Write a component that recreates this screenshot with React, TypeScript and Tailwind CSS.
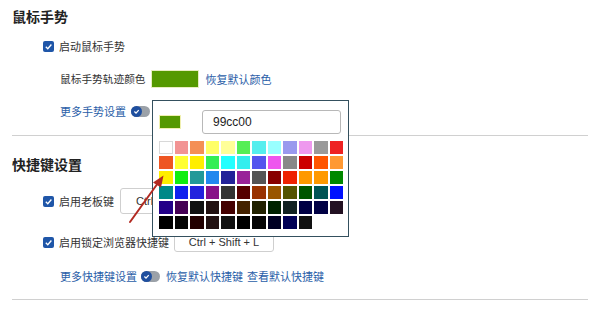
import React from "react";

const rows: string[][] = [
  ["#ffffff", "#f29494", "#f48f55", "#ffff66", "#ffff99", "#55ee55", "#55eeee", "#99ffff", "#9999ee", "#ee99ee", "#9a9a9a", "#ee2222"],
  ["#ee5522", "#ffff33", "#ffee00", "#33ee55", "#22ffff", "#33eeee", "#5555ee", "#ee55ee", "#888888", "#cc0000", "#ff5500", "#ff9933"],
  ["#ffee00", "#11ee11", "#229999", "#2288ee", "#222299", "#992299", "#555555", "#880000", "#ee2200", "#ff9900", "#ff9900", "#008800"],
  ["#008888", "#1122ee", "#2222dd", "#881188", "#333333", "#550000", "#993300", "#995500", "#555500", "#005500", "#005555", "#0011ff"],
  ["#220088", "#440055", "#111111", "#221111", "#440000", "#442200", "#222200", "#002200", "#112222", "#000044", "#000044", "#221122"],
  ["#000000", "#050505", "#220000", "#221111", "#111111", "#000000", "#050505", "#000022", "#000055", "#111111"],
];

function Check() {
  return (
    <span className="w-[11px] h-[11px] bg-[#1f56a8] rounded-[2px] flex items-center justify-center shrink-0">
      <svg width="9" height="9" viewBox="0 0 10 10">
        <path d="M2 5.2 L4.2 7.4 L8.2 2.8" stroke="#fff" strokeWidth="1.5" fill="none" />
      </svg>
    </span>
  );
}

function Toggle() {
  return (
    <span className="relative w-[19px] h-[11px] rounded-full bg-[#9ba1a8] shrink-0 flex items-center">
      <span className="w-[11px] h-[11px] rounded-full bg-[#1f4f9f] flex items-center justify-center">
        <svg width="7" height="7" viewBox="0 0 10 10">
          <path d="M2 5 L4.3 7.3 L8.2 3" stroke="#fff" strokeWidth="1.8" fill="none" />
        </svg>
      </span>
    </span>
  );
}

export default function App() {
  const font = "font-['Noto_Sans_CJK_SC','Noto_Sans',sans-serif]";
  return (
    <div className={`relative w-[600px] h-[317px] bg-white overflow-hidden text-[#333] ${font}`}>
      <div className="flex flex-col px-3">
        <h2 className="mt-[6px] h-5 leading-5 text-[14px] font-bold text-[#222]">鼠标手势</h2>
        <div className="mt-[10px] h-5 flex items-center pl-[31px]">
          <Check />
          <span className="ml-[5px] text-[11px] leading-none">启动鼠标手势</span>
        </div>
        <div className="mt-[14px] h-[18px] flex items-center pl-[48px]">
          <span className="text-[10.7px] leading-none">鼠标手势轨迹颜色</span>
          <span className="ml-[5px] w-[48px] h-[18px] bg-[#559900] border border-[#e8eec0]" />
          <span className="ml-[7px] text-[11px] leading-none text-[#2a5ea8]">恢复默认颜色</span>
        </div>
        <div className="mt-[17px] h-3 flex items-center pl-[48px]">
          <span className="text-[11px] leading-none text-[#2a5ea8]">更多手势设置</span>
          <span className="ml-[5px]"><Toggle /></span>
        </div>
        <div className="mt-[18px] h-px bg-[#d0d0d0]" />
        <h2 className="mt-[18px] h-5 leading-5 text-[14px] font-bold text-[#222]">快捷键设置</h2>
        <div className="mt-[14px] h-[26px] flex items-center pl-[31px]">
          <Check />
          <span className="ml-[5px] text-[11px] leading-none">启用老板键</span>
          <span className="ml-[6px] w-[100px] h-[26px] border border-[#cfcfcf] rounded-[3px] flex items-center pl-[15px] text-[11px] text-[#333] font-['Liberation_Sans',sans-serif]">
            Ctrl + Alt + Q
          </span>
        </div>
        <div className="mt-[18px] h-5 flex items-center pl-[31px]">
          <Check />
          <span className="ml-[5px] text-[11px] leading-none">启用锁定浏览器快捷键</span>
          <span className="ml-[5px] w-[100px] h-5 border border-[#cfcfcf] rounded-[3px] flex items-center justify-center text-[11px] text-[#333] font-['Liberation_Sans',sans-serif]">
            Ctrl + Shift + L
          </span>
        </div>
        <div className="mt-[18px] h-3 flex items-center pl-[48px] text-[11px] leading-none text-[#2a5ea8]">
          <span>更多快捷键设置</span>
          <span className="ml-[4px]"><Toggle /></span>
          <span className="ml-[6px]">恢复默认快捷键</span>
          <span className="ml-[4px]">查看默认快捷键</span>
        </div>
        <div className="mt-[17px] h-px bg-[#d0d0d0]" />
      </div>

      {/* color picker popup */}
      <div className="absolute left-[152px] top-[100px] w-[197px] h-[137px] bg-white border border-[#34505e]">
        <div className="flex items-center mt-[9px] ml-[6px]">
          <span className="w-[22px] h-[14px] bg-[#559900] border border-[#f0f0b0]" />
          <div className="ml-[21px] w-[139px] h-[24px] border border-[#b8b8b8] rounded-[3px] flex items-center pl-[10px] text-[12px] text-[#222] font-['Liberation_Sans',sans-serif]">
            99cc00
          </div>
        </div>
        <div className="ml-[6px] mt-[7px] grid grid-cols-[repeat(12,13.5px)] auto-rows-[13px] gap-x-[2px] gap-y-[2px]">
          {rows.flatMap((r, i) =>
            r.map((c, j) => (
              <span
                key={`${i}-${j}`}
                className={i === 0 && j === 0 ? "border border-[#d8d8d8]" : ""}
                style={{ backgroundColor: c }}
              />
            ))
          )}
        </div>
      </div>

      {/* red arrow annotation */}
      <svg className="absolute left-0 top-0 pointer-events-none" width="600" height="317">
        <path d="M130 222 L158 183" stroke="#b22a22" strokeWidth="2" fill="none" strokeLinecap="round" />
        <polygon points="163.5,175.5 153,182.5 161,187.5" fill="#b22a22" />
      </svg>
    </div>
  );
}
